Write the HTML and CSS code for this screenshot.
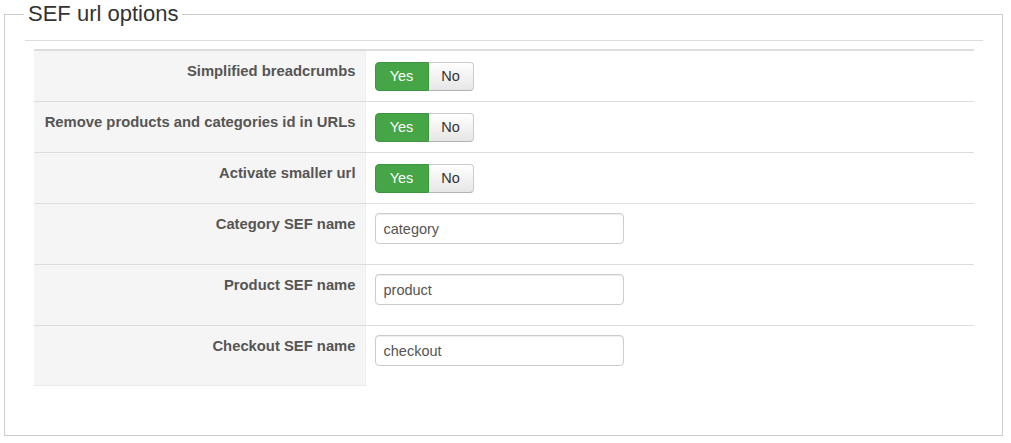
FILE: index.html
```html
<!DOCTYPE html>
<html lang="en">
<head>
  <meta charset="UTF-8" />
  <title>SEF url options</title>
  <link rel="stylesheet" href="styles.css">
</head>
<body>
  <fieldset class="options">
    <legend>SEF url options</legend>
    <div class="rule"></div>
    <table class="admintable">
      <tr>
        <td class="key">Simplified breadcrumbs</td>
        <td class="value">
          <div class="btn-group"><span class="btn yes active">Yes</span><span class="btn no">No</span></div>
        </td>
      </tr>
      <tr>
        <td class="key">Remove products and categories id in URLs</td>
        <td class="value">
          <div class="btn-group"><span class="btn yes active">Yes</span><span class="btn no">No</span></div>
        </td>
      </tr>
      <tr>
        <td class="key">Activate smaller url</td>
        <td class="value">
          <div class="btn-group"><span class="btn yes active">Yes</span><span class="btn no">No</span></div>
        </td>
      </tr>
      <tr>
        <td class="key">Category SEF name</td>
        <td class="value"><input type="text" value="category"></td>
      </tr>
      <tr>
        <td class="key">Product SEF name</td>
        <td class="value"><input type="text" value="product"></td>
      </tr>
      <tr class="last">
        <td class="key">Checkout SEF name</td>
        <td class="value"><input type="text" value="checkout"></td>
      </tr>
    </table>
  </fieldset>
</body>
</html>
```

FILE: styles.css
```css
* { box-sizing: border-box; }
body {
  margin: 0;
  font-family: "Liberation Sans", Arial, sans-serif;
  font-size: 14px;
  color: #333;
  background: #fff;
}
.options {
  margin: 0 0 0 4px;
  width: 999px;
  height: 436px;
  padding: 0 19px 0 20px;
  border: 1px solid #ccc;
}
.options legend {
  margin-left: -1px;
  padding: 0 4px;
  font-size: 22px;
  line-height: 28px;
  color: #333;
}
.rule {
  margin-top: 12px;
  border-top: 1px solid #ddd;
}
.admintable {
  margin: 8px 9px 0;
  width: 940px;
  border-collapse: collapse;
  border-top: 2px solid #ddd;
}
.admintable td {
  padding: 9px 9px 10px;
  vertical-align: top;
  border-bottom: 1px solid #ddd;
  line-height: 20px;
}
.admintable tr.last td { padding-bottom: 9px; }
.admintable tr.last td.value { border-bottom: none; }
.admintable tr.last td.key { border-bottom-color: #e8e8e8; }
.admintable td.key {
  width: 331px;
  padding-top: 10px;
  padding-bottom: 9px;
  text-align: right;
  font-size: 14.8px;
  font-weight: bold;
  color: #555;
  background: #f5f5f5;
  border-right: 1px solid #eee;
}
.btn-group {
  display: flex;
  margin: 2px 0 0;
}
.btn {
  display: block;
  height: 29px;
  padding: 0 12px;
  line-height: 27px;
  font-size: 14.5px;
  border: 1px solid #bbb;
}
.btn.yes {
  width: 54px;
  text-align: center;
  border-radius: 4px 0 0 4px;
}
.btn.yes.active {
  color: #fff;
  background: #46a546;
  border-color: #3f953f;
}
.btn.no {
  width: 45px;
  text-align: center;
  color: #333;
  border-left: none;
  border-radius: 0 4px 4px 0;
  background: linear-gradient(#fff, #e6e6e6);
  border-color: #ccc #ccc #b3b3b3;
}
.value input {
  display: block;
  width: 249px;
  height: 31px;
  margin: 0 0 10px;
  padding: 4px 8px;
  font-family: inherit;
  font-size: 14.5px;
  color: #555;
  border: 1px solid #ccc;
  border-radius: 4px;
  box-shadow: inset 0 1px 1px rgba(0, 0, 0, 0.075);
}
```
